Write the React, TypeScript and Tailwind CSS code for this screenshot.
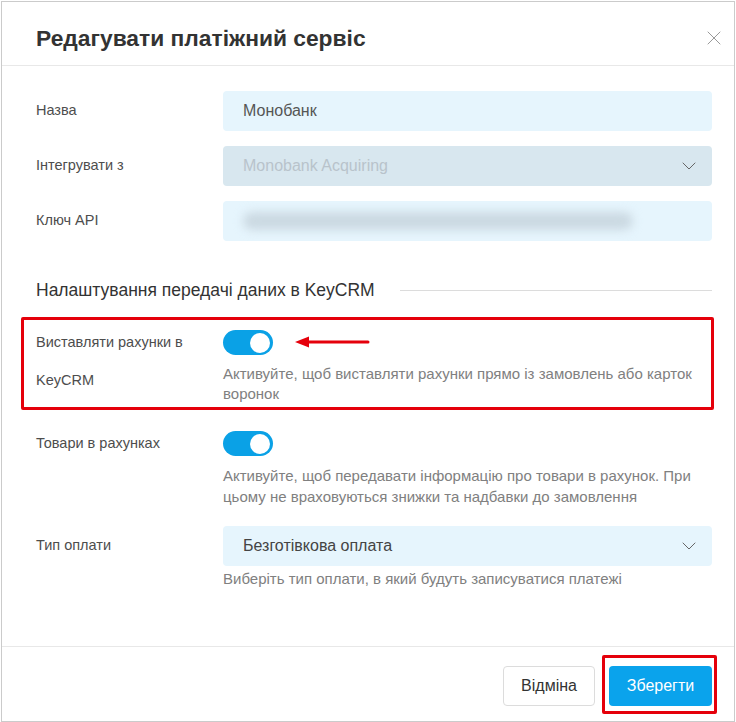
import React from 'react';
import { ChevronDown, X } from 'lucide-react';

const Toggle: React.FC = () => (
    <div className="w-[50px] h-[25px] rounded-full bg-[#0aa1e6] flex items-center justify-end pr-[3px]">
        <div className="w-[20px] h-[20px] rounded-full bg-white" />
    </div>
);

const Row: React.FC<{ label: React.ReactNode; children: React.ReactNode; className?: string; labelClass?: string }> = ({ label, children, className = '', labelClass = '' }) => (
    <div className={`flex ${className}`}>
        <div className={`w-[187px] shrink-0 text-[14.5px] text-[#4d4d4d] ${labelClass}`}>{label}</div>
        <div className="flex-1 min-w-0">{children}</div>
    </div>
);

export default function App() {
    return (
        <div className="relative w-[736px] h-[722px] bg-white p-px" style={{ fontFamily: '"Liberation Sans", Arial, sans-serif' }}>
            <div className="w-[734px] h-[721px] border border-[#cbcbcb] flex flex-col">
                {/* header */}
                <div className="h-[64px] shrink-0 flex items-center justify-between pl-[34px] pr-[8px] pt-[9px] border-b border-[#e8e8e8]">
                    <h1 className="text-[22.8px] font-bold text-[#333]">Редагувати платіжний сервіс</h1>
                    <X className="w-[24px] h-[24px] text-[#999]" strokeWidth={1} />
                </div>

                {/* body */}
                <div className="flex-1 flex flex-col pl-[34px] pr-[22px] pt-[25px]">
                    <Row label="Назва" labelClass="h-[40px] flex items-center">
                        <div className="h-[40px] rounded-[4px] bg-[#e6f5fd] flex items-center px-[20px] text-[16px] text-[#555]">Монобанк</div>
                    </Row>
                    <Row label="Інтегрувати з" className="mt-[15px]" labelClass="h-[40px] flex items-center">
                        <div className="h-[40px] rounded-[4px] bg-[#d8e7ef] flex items-center justify-between pl-[20px] pr-[11px] text-[16px] text-[#b8c3cb]">
                            <span>Monobank Acquiring</span>
                            <ChevronDown className="w-[24px] h-[24px] text-[#666]" strokeWidth={1} />
                        </div>
                    </Row>
                    <Row label="Ключ API" className="mt-[15px]" labelClass="h-[40px] flex items-center">
                        <div className="h-[40px] rounded-[4px] bg-[#e6f5fd] flex items-center px-[20px] overflow-hidden">
                            <div className="h-[18px] w-[390px] rounded-full bg-[#cbd9e2] blur-[5px]" />
                        </div>
                    </Row>

                    <div className="mt-[37px] h-[24px] flex items-center gap-[25px]">
                        <span className="text-[17.5px] text-[#333] whitespace-nowrap">Налаштування передачі даних в KeyCRM</span>
                        <div className="flex-1 h-px bg-[#dcdcdc]" />
                    </div>

                    <Row label={<>Виставляти рахунки в<br />KeyCRM</>} className="mt-[21px]" labelClass="leading-[38px] pr-[20px]">
                        <div className="pt-[7px]">
                            <Toggle />
                            <p className="mt-[9px] text-[15px] leading-[20px] text-[#808080]">
                                Активуйте, щоб виставляти рахунки прямо із замовлень або карток воронок
                            </p>
                        </div>
                    </Row>

                    <Row label="Товари в рахунках" className="mt-[20px]" labelClass="leading-[38px]">
                        <div className="pt-[7px]">
                            <Toggle />
                            <p className="mt-[9px] text-[15px] leading-[21px] text-[#808080]">
                                Активуйте, щоб передавати інформацію про товари в рахунок. При цьому не враховуються знижки та надбавки до замовлення
                            </p>
                        </div>
                    </Row>

                    <Row label="Тип оплати" className="mt-[19px]" labelClass="h-[40px] flex items-center">
                        <div className="h-[40px] rounded-[4px] bg-[#e6f5fd] flex items-center justify-between pl-[20px] pr-[11px] text-[16px] text-[#444]">
                            <span>Безготівкова оплата</span>
                            <ChevronDown className="w-[24px] h-[24px] text-[#666]" strokeWidth={1} />
                        </div>
                        <p className="mt-[3px] text-[15px] leading-[20px] text-[#808080]">Виберіть тип оплати, в який будуть записуватися платежі</p>
                    </Row>
                </div>

                {/* footer */}
                <div className="h-[75px] shrink-0 border-t border-[#e8e8e8] flex items-start justify-end gap-[14px] pt-[19px] pr-[22px]">
                    <button className="h-[40px] w-[92px] rounded-[4px] border border-[#dcdcdc] bg-white text-[16px] text-[#333]">Відміна</button>
                    <button className="h-[40px] w-[103px] rounded-[4px] bg-[#0aa3ec] text-[16px] text-white">Зберегти</button>
                </div>
            </div>

            {/* annotations */}
            <div className="absolute left-[21px] top-[317px] w-[693px] h-[93px] border-[3px] border-[#e5000b] rounded-[2px]" />
            <svg className="absolute left-[293px] top-[335px]" width="78" height="14" viewBox="0 0 78 14">
                <path d="M14 7 H75" stroke="#e5000b" strokeWidth="3" strokeLinecap="round" />
                <path d="M2 7 L16 1.5 L16 12.5 Z" fill="#e5000b" />
            </svg>
            <div className="absolute left-[602px] top-[655px] w-[115px] h-[59px] border-[3px] border-[#e5000b] rounded-[2px]" />
        </div>
    );
}
